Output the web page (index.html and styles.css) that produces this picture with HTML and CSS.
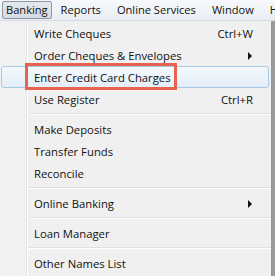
FILE: index.html
```html
<!DOCTYPE html>
<html>
<head>
<meta charset="utf-8">
<link rel="stylesheet" href="styles.css">
</head>
<body>
<div class="menubar">
  <span class="top active">Banking</span>
  <span class="top">Reports</span>
  <span class="top">Online Services</span>
  <span class="top">Window</span>
  <span class="top">H</span>
</div>
<div class="menu">
  <div class="item"><span class="label">Write Cheques</span><span class="key">Ctrl+W</span></div>
  <div class="item"><span class="label">Order Cheques &amp; Envelopes</span><span class="arrow"></span></div>
  <div class="item hot"><span class="label">Enter Credit Card Charges</span><span class="callout"></span></div>
  <div class="item"><span class="label">Use Register</span><span class="key">Ctrl+R</span></div>
  <div class="sep"></div>
  <div class="item"><span class="label">Make Deposits</span></div>
  <div class="item"><span class="label">Transfer Funds</span></div>
  <div class="item"><span class="label">Reconcile</span></div>
  <div class="sep"></div>
  <div class="item"><span class="label">Online Banking</span><span class="arrow"></span></div>
  <div class="sep"></div>
  <div class="item"><span class="label">Loan Manager</span></div>
  <div class="sep"></div>
  <div class="item"><span class="label">Other Names List</span></div>
</div>
</body>
</html>
```
FILE: styles.css
```css
html, body {
  margin: 0;
  padding: 0;
  width: 275px;
  height: 276px;
  overflow: hidden;
  background: #9a9a9a;
  font-family: "Open Sans", "Noto Sans", sans-serif;
  font-size: 11.3px;
  color: #111;
}
.menubar {
  height: 21px;
  background: linear-gradient(#f6f8fb, #e9edf3);
  border-bottom: 1px solid #d8dde5;
  display: flex;
  align-items: center;
  white-space: nowrap;
  overflow: hidden;
  box-sizing: border-box;
  padding-left: 2px;
  font-size: 11.1px;
}
.top {
  flex: none;
  padding: 0 7px 0 7px;
  height: 18px;
  line-height: 16px;
  box-sizing: border-box;
  border: 1px solid transparent;
}
.active {
  background: linear-gradient(#e4e8ee, #d6dce4);
  border: 1px solid #8d97a3;
  border-radius: 2px;
  padding: 0 3px 0 3px;
  margin-right: 1px;
}
.menu {
  width: 272px;
  height: 255px;
  box-sizing: border-box;
  background: linear-gradient(to right, #f1f1f1 0, #f1f1f1 26px, #e2e3e3 26px, #e2e3e3 27px, #ffffff 27px, #ffffff 28px, #f0f0f0 28px);
  border-right: 1px solid #979797;
  padding-top: 1px;
  display: flex;
  flex-direction: column;
}
.item {
  height: 22px;
  flex: none;
  display: flex;
  align-items: center;
  padding-left: 34px;
  padding-right: 16px;
  position: relative;
  white-space: nowrap;
  padding-top: 1px;
  box-sizing: border-box;
}
.label { flex: 1; }
.key { margin-right: 2px; }
.arrow {
  width: 0;
  height: 0;
  border-top: 4px solid transparent;
  border-bottom: 4px solid transparent;
  border-left: 4px solid #111;
  margin-right: 3px;
}
.hot {
  margin: 0 2px 0 1px;
  padding-left: 32px;
  border: 1px solid #a9c9e5;
  border-radius: 3px;
  background: linear-gradient(#f4f8fd, #e4eef9);
}
.callout {
  position: absolute;
  left: 23px;
  top: -4px;
  width: 152px;
  height: 27px;
  border: 3px solid #e8634f;
  box-sizing: border-box;
}
.sep {
  height: 2px;
  flex: none;
  margin: 3px 0 3px 29px;
  border-top: 1px solid #e0e0e0;
  border-bottom: 1px solid #ffffff;
  box-sizing: border-box;
}
```
